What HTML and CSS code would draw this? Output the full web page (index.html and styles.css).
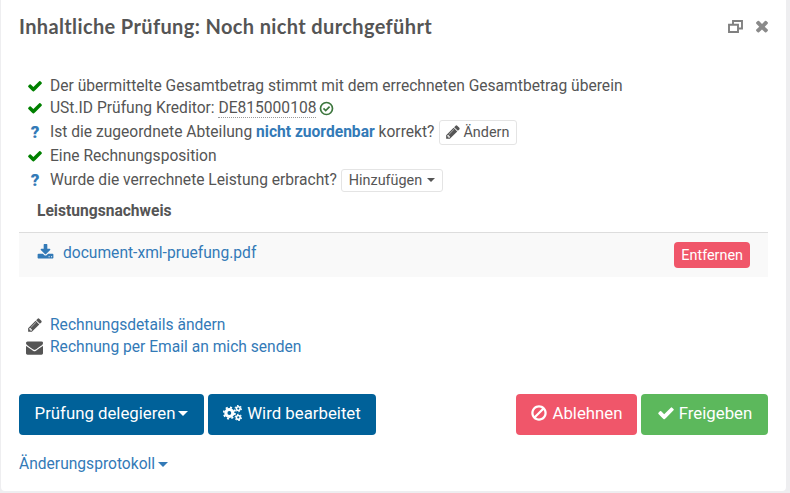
FILE: index.html
```html
<!DOCTYPE html>
<html lang="de">
<head>
<meta charset="utf-8">
<title>Inhaltliche Prüfung</title>
<link rel="stylesheet" href="styles.css">
</head>
<body>
<svg class="defs" width="0" height="0" aria-hidden="true">
<symbol id="i-ok" viewBox="0 0 1792 1792"><path d="M1671 566q0 40-28 68l-724 724-136 136q-28 28-68 28t-68-28l-136-136-362-362q-28-28-28-68t28-68l136-136q28-28 68-28t68 28l294 295 656-657q28-28 68-28t68 28l136 136q28 28 28 68z"/></symbol>
<symbol id="i-pencil" viewBox="0 0 1792 1792"><path d="M491 1536l91-91-235-235-91 91v107h128v128h107zm523-928q0-22-22-22-10 0-17 7l-542 542q-7 7-7 17 0 22 22 22 10 0 17-7l542-542q7-7 7-17zm-54-192l416 416-832 832h-416v-416zm683 96q0 53-37 90l-166 166-416-416 166-165q36-38 90-38 53 0 91 38l235 234q37 39 37 91z"/></symbol>
<symbol id="i-mail" viewBox="0 0 1792 1792"><path d="M1792 710v794q0 66-47 113t-113 47h-1472q-66 0-113-47t-47-113v-794q44 49 101 87 362 246 497 345 57 42 92.500 65.500t94.500 48 110 24.500h2q51 0 110-24.500t94.500-48 92.500-65.500q170-123 498-345 57-39 100-87zm0-294q0 79-49 151t-122 123q-376 261-468 325-10 7-42.500 30.500t-54 38-52 32.500-57.500 27-50 9h-2q-23 0-50-9t-57.500-27-52-32.500-54-38-42.500-30.500q-91-64-262-182.500t-205-142.500q-62-42-117-115.500t-55-136.500q0-78 41.500-130t118.500-52h1472q65 0 112.500 47t47.500 113z"/></symbol>
<symbol id="i-download" viewBox="0 0 1792 1792"><path d="M1344 1344q0-26-19-45t-45-19-45 19-19 45 19 45 45 19 45-19 19-45zm256 0q0-26-19-45t-45-19-45 19-19 45 19 45 45 19 45-19 19-45zm128-224v320q0 40-28 68t-68 28h-1472q-40 0-68-28t-28-68v-320q0-40 28-68t68-28h465l135 136q58 56 136 56t136-56l136-136h464q40 0 68 28t28 68zm-325-569q17 41-14 70l-448 448q-18 19-45 19t-45-19l-448-448q-31-29-14-70 17-39 59-39h256v-448q0-26 19-45t45-19h256q26 0 45 19t19 45v448h256q42 0 59 39z"/></symbol>
<symbol id="i-ban" viewBox="0 0 1792 1792"><path d="M1440 893q0-161-87-295l-754 753q137 89 297 89 111 0 211.500-43.500t173.500-116.500 116-174.500 43-212.500zm-999 299l755-754q-135-91-300-91-148 0-273 73t-198 199-73 274q0 162 89 299zm1223-299q0 157-61 300t-163.500 246-245 164-298.500 61-298.500-61-245-164-163.500-246-61-300 61-299.500 163.500-245.500 245-164 298.500-61 298.500 61 245 164 163.500 245.500 61 299.500z"/></symbol>
<symbol id="i-times" viewBox="0 0 1792 1792"><path d="M1490 1322q0 40-28 68l-136 136q-28 28-68 28t-68-28l-294-294-294 294q-28 28-68 28t-68-28l-136-136q-28-28-28-68t28-68l294-294-294-294q-28-28-28-68t28-68l136-136q28-28 68-28t68 28l294 294 294-294q28-28 68-28t68 28l136 136q28 28 28 68t-28 68l-294 294 294 294q28 28 28 68z"/></symbol>
</svg>

<main class="card">
  <header class="head">
    <h1 class="title">Inhaltliche Prüfung: Noch nicht durchgeführt</h1>
    <div class="win-tools">
      <svg class="restore" viewBox="0 0 15 13" aria-hidden="true"><path d="M5 4V1h9v7.500h-4"/><path d="M1 4.700h9v7.300H1z"/></svg>
      <svg class="close" aria-hidden="true"><use href="#i-times"/></svg>
    </div>
  </header>

  <ul class="checks">
    <li class="check"><svg class="ic ok" aria-hidden="true"><use href="#i-ok"/></svg><span>Der übermittelte Gesamtbetrag stimmt mit dem errechneten Gesamtbetrag überein</span></li>
    <li class="check"><svg class="ic ok" aria-hidden="true"><use href="#i-ok"/></svg><span>USt.ID Prüfung Kreditor: <span class="vat">DE815000108</span></span>
      <svg class="vat-ok" viewBox="0 0 15 15" aria-hidden="true"><circle cx="7.500" cy="7.500" r="6"/><path d="M4.500 7.300l2.200 2.200 3.900-3.900"/></svg></li>
    <li class="check tall"><span class="ic q">?</span><span>Ist die zugeordnete Abteilung <a class="strong-link">nicht zuordenbar</a> korrekt?</span>
      <button class="mini"><svg class="mini-ic" aria-hidden="true"><use href="#i-pencil"/></svg>Ändern</button></li>
    <li class="check"><svg class="ic ok" aria-hidden="true"><use href="#i-ok"/></svg><span>Eine Rechnungsposition</span></li>
    <li class="check tall2"><span class="ic q">?</span><span>Wurde die verrechnete Leistung erbracht?</span>
      <button class="mini">Hinzufügen<i class="caret"></i></button></li>
  </ul>

  <h2 class="sub">Leistungsnachweis</h2>
  <section class="files">
    <a class="file"><svg class="dl" aria-hidden="true"><use href="#i-download"/></svg>document-xml-pruefung.pdf</a>
    <button class="remove">Entfernen</button>
  </section>

  <nav class="actions">
    <a class="action"><svg class="ic grey" aria-hidden="true"><use href="#i-pencil"/></svg>Rechnungsdetails ändern</a>
    <a class="action"><svg class="ic grey mail" aria-hidden="true"><use href="#i-mail"/></svg>Rechnung per Email an mich senden</a>
  </nav>

  <footer class="btns">
    <div class="btn-group">
      <button class="btn blue">Prüfung delegieren<i class="caret"></i></button>
      <button class="btn blue wide">
        <svg class="gears" viewBox="0 0 18 15" aria-hidden="true">
          <circle class="gear-b" cx="6" cy="7.500" r="3.300"/><circle class="gear-t" cx="6" cy="7.500" r="5.300"/>
          <circle class="gear-s" cx="14.500" cy="3.300" r="1.800"/><circle class="gear-st" cx="14.500" cy="3.300" r="3"/>
          <circle class="gear-s" cx="14.500" cy="11.700" r="1.800"/><circle class="gear-st" cx="14.500" cy="11.700" r="3"/>
        </svg>Wird bearbeitet</button>
    </div>
    <div class="btn-group">
      <button class="btn red"><svg class="bi" aria-hidden="true"><use href="#i-ban"/></svg>Ablehnen</button>
      <button class="btn green"><svg class="bi" aria-hidden="true"><use href="#i-ok"/></svg>Freigeben</button>
    </div>
  </footer>

  <a class="log">Änderungsprotokoll<i class="caret"></i></a>
</main>
</body>
</html>
```

FILE: styles.css
```css
* { box-sizing: border-box; }
html, body { margin: 0; height: 100%; }
body {
  background: #eeeef0;
  font-family: Roboto, "Liberation Sans", sans-serif;
  font-size: 15.6px;
  color: #555;
  overflow: hidden;
}
.defs { position: absolute; }
.card {
  width: 785px;
  height: 491px;
  margin-left: 1px;
  padding: 0 18px;
  background: #fff;
  border-radius: 0 0 4px 4px;
}
.head {
  display: flex;
  align-items: center;
  justify-content: space-between;
  height: 52px;
}
.title {
  margin: 0;
  font-family: Lato, "Open Sans", sans-serif;
  font-size: 20px;
  font-weight: 700;
  letter-spacing: 0.37px;
  color: #555;
}
.win-tools { display: flex; align-items: center; gap: 10px; margin-right: -3px; }
.restore { width: 15px; height: 13px; fill: none; stroke: #808080; stroke-width: 1.900; }
.close { width: 18px; height: 18px; fill: #8a8a8a; }
.checks { list-style: none; margin: 23px 0 0; padding: 0 0 0 8px; }
.check { display: flex; align-items: center; height: 22px; }
.check.tall { height: 26px; }
.check.tall2 { height: 24px; margin-top: 1px; }
.ic { flex: none; width: 16px; height: 16px; margin-right: 7px; }
.ok { fill: #008000; }
.q { display: block; text-align: center; font-weight: 900; font-size: 17px; line-height: 16px; color: #337ab7; }
.grey { fill: #555; }
.vat { border-bottom: 1px dotted #999; }
.vat-ok { width: 15px; height: 15px; margin-left: 3px; fill: none; stroke: #3c763d; stroke-width: 1.700; }
.strong-link { color: #337ab7; font-weight: 700; }
.mini {
  display: inline-flex;
  align-items: center;
  height: 25px;
  margin-left: 4px;
  padding: 0 7px;
  background: #fff;
  border: 1px solid #e4e4e4;
  border-radius: 3px;
  font: 14.4px Roboto, sans-serif;
  color: #555;
}
.tall .mini { margin-left: 5px; padding-left: 5px; }
.tall2 .mini { height: 23px; }
.mini-ic { width: 16px; height: 16px; margin-right: 2px; fill: #555; }
.caret {
  display: inline-block;
  margin-left: 4px;
  border-top: 5px solid currentColor;
  border-left: 5px solid transparent;
  border-right: 5px solid transparent;
}
.mini .caret { margin-left: 5px; border-width: 4px 4px 0; }
.sub { margin: 8px 0 0 18px; height: 32px; font-size: 15.6px; font-weight: 700; line-height: 22px; color: #555; }
.files {
  display: flex;
  align-items: flex-start;
  justify-content: space-between;
  height: 45px;
  padding: 9px 18px;
  background: #f9f9f9;
  border-top: 1px solid #ddd;
}
.file { display: flex; align-items: center; height: 22px; color: #337ab7; }
.dl { width: 17px; height: 17px; margin: 0 9px 2px 0; fill: #337ab7; }
.remove {
  height: 26px;
  padding: 0 7px;
  border: 0;
  border-radius: 4px;
  background: #f0566a;
  color: #fff;
  font: 14.4px Roboto, sans-serif;
}
.actions { margin-top: 37px; padding-left: 8px; }
.action { display: flex; align-items: center; height: 22px; color: #337ab7; }
.mail { width: 17px; height: 17px; margin-right: 7px; margin-left: -1px; }
.btns { display: flex; justify-content: space-between; margin-top: 36px; }
.btn-group { display: flex; gap: 4px; }
.btn {
  display: inline-flex;
  align-items: center;
  justify-content: center;
  height: 41px;
  border: 0;
  padding: 0 0 3px;
  border-radius: 4px;
  color: #fff;
  font: 400 16.8px Roboto, sans-serif;
}
.blue { background: #006199; width: 185px; }
.blue.wide { width: 168px; }
.blue .caret { margin-left: 3px; }
.red { background: #f0566a; width: 121px; }
.green { background: #5cb85c; width: 127px; }
.bi { width: 18px; height: 18px; margin-right: 4px; fill: #fff; }
.gears { width: 19px; height: 16px; margin-right: 5px; }
.gear-b { fill: none; stroke: #fff; stroke-width: 3; }
.gear-t { fill: none; stroke: #fff; stroke-width: 1.600; stroke-dasharray: 2 2.160; }
.gear-s { fill: none; stroke: #fff; stroke-width: 1.500; }
.gear-st { fill: none; stroke: #fff; stroke-width: 1; stroke-dasharray: 1.500 1.640; }
.log { display: inline-flex; align-items: center; margin-top: 20px; color: #337ab7; }
.log .caret { margin-left: 3px; }
```
